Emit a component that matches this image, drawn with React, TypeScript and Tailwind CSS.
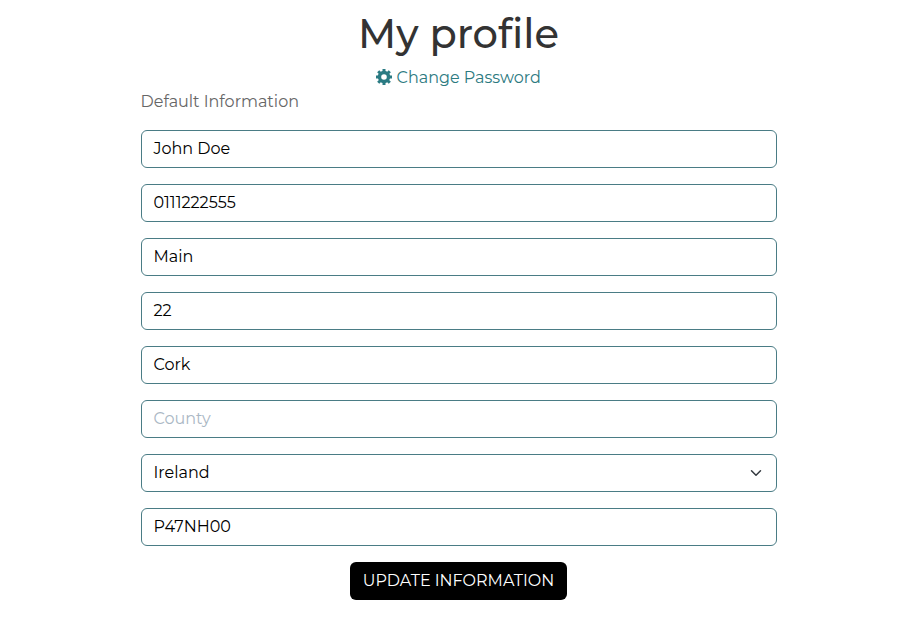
type Field = { text: string; placeholder?: boolean; select?: boolean };

const fields: Field[] = [
  { text: "John Doe" },
  { text: "0111222555" },
  { text: "Main" },
  { text: "22" },
  { text: "Cork" },
  { text: "County", placeholder: true },
  { text: "Ireland", select: true },
  { text: "P47NH00" },
];

function Gear() {
  return (
    <svg viewBox="0 0 16 16" className="mb-[2px] size-4" fill="none" stroke="#2a7b83">
      <circle cx="8" cy="8" r="4.5" strokeWidth="3.4" />
      <path
        d="M8 0v3M8 13v3M0 8h3M13 8h3M2.200 2.200l2 2M11.800 11.800l2 2M2.200 13.800l2-2M11.800 4.200l2-2"
        strokeWidth="3"
      />
    </svg>
  );
}

export default function App() {
  return (
    <main className="flex min-h-[643px] flex-col items-center bg-white font-[Montserrat,Inter,sans-serif] text-base">
      <h1 className="mt-[10px] text-[40px] leading-[48px] font-medium text-[#333]">My profile</h1>
      <a href="#" className="mt-2 flex h-6 items-center gap-[4.5px] text-[#2c7a7f]">
        <Gear />
        <span>Change Password</span>
      </a>
      <form className="w-[636px]">
        <p className="h-6 text-[#666]">Default Information</p>
        <div className="mt-4 flex flex-col gap-4">
          {fields.map((f) => (
            <div
              key={f.text}
              className="flex h-[38px] items-center justify-between rounded-md border border-[#4a7c85] px-3"
            >
              <span className={f.placeholder ? "text-[#aab7c4]" : "text-black"}>{f.text}</span>
              {f.select && (
                <svg viewBox="0 0 16 16" className="h-3 w-4" fill="none" stroke="#343a40" strokeWidth="2" strokeLinecap="round" strokeLinejoin="round">
                  <path d="m2 5 6 6 6-6" />
                </svg>
              )}
            </div>
          ))}
        </div>
        <button type="button" className="mx-auto mt-4 flex h-[38px] w-[217px] items-center justify-center rounded-md bg-black whitespace-nowrap text-white">
          UPDATE INFORMATION
        </button>
      </form>
    </main>
  );
}
